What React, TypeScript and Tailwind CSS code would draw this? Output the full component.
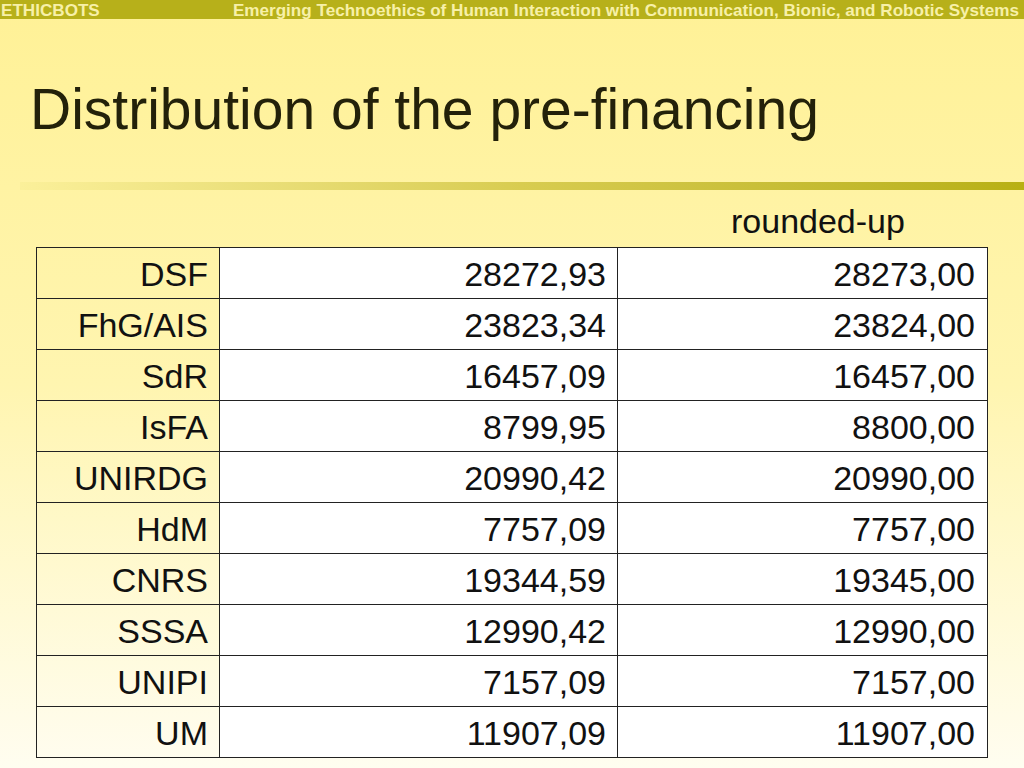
export default function App() {
  const rows: [string, string, string][] = [
    ["DSF", "28272,93", "28273,00"],
    ["FhG/AIS", "23823,34", "23824,00"],
    ["SdR", "16457,09", "16457,00"],
    ["IsFA", "8799,95", "8800,00"],
    ["UNIRDG", "20990,42", "20990,00"],
    ["HdM", "7757,09", "7757,00"],
    ["CNRS", "19344,59", "19345,00"],
    ["SSSA", "12990,42", "12990,00"],
    ["UNIPI", "7157,09", "7157,00"],
    ["UM", "11907,09", "11907,00"],
  ];
  return (
    <div
      className="w-[1024px] h-[768px] overflow-hidden flex flex-col bg-gradient-to-b from-[#fff196] via-[#fff5b0] to-[#fffdf0]"
      style={{ fontFamily: '"Liberation Sans", Arial, sans-serif' }}
    >
      <div className="h-[19px] bg-[#b7b01a] flex items-center justify-between pl-[1px] pr-[5px] pt-[2px] text-[17.1px] font-bold text-[#f7f0a8] leading-none">
        <span>ETHICBOTS</span>
        <span>Emerging Technoethics of Human Interaction with Communication, Bionic, and Robotic Systems</span>
      </div>
      <div className="pl-[30px] pt-[62px] h-[163px] text-[57px] leading-none text-[#23210a]">
        Distribution of the pre-financing
      </div>
      <div className="ml-[20px] h-[8px] bg-gradient-to-r from-[#fbf09a] via-[#d8cc50] to-[#b8b012]" />
      <div className="h-[57px] flex items-end pb-[9px]">
        <span className="ml-[731px] text-[34px] leading-none text-[#111]">rounded-up</span>
      </div>
      <table className="ml-[36px] w-[952px] border-collapse text-[34px] text-[#111]">
        <tbody>
          {rows.map((r) => (
            <tr key={r[0]} className="h-[51px]">
              <td className="w-[183px] border-[1.5px] border-[#222] text-right pr-[11px] pt-[2px] leading-none">{r[0]}</td>
              <td className="w-[398px] border-[1.5px] border-[#222] bg-white text-right pr-[11px] pt-[2px] leading-none">{r[1]}</td>
              <td className="border-[1.5px] border-[#222] bg-white text-right pr-[12px] pt-[2px] leading-none">{r[2]}</td>
            </tr>
          ))}
        </tbody>
      </table>
    </div>
  );
}
